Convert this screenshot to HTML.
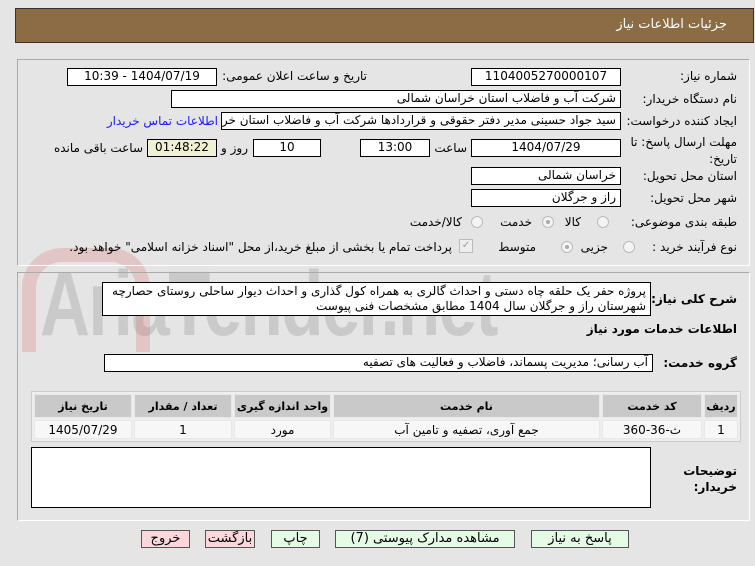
<!DOCTYPE html>
<html><head><meta charset="utf-8"><style>
body{margin:0;width:755px;height:566px;background:#e5e5e5;font-family:Tahoma,"DejaVu Sans","Liberation Sans",sans-serif;font-size:12px;color:#000;position:relative;overflow:hidden}
.a{position:absolute}
.f{position:absolute;background:#fff;border:1px solid #000;box-sizing:border-box;direction:rtl;padding:0 4px;line-height:15px;white-space:nowrap;overflow:hidden}
.c{text-align:center}
.l{position:absolute;direction:rtl;white-space:nowrap}
.r{right:18px}
.rad{position:absolute;width:12px;height:12px;border-radius:50%;border:1px solid #bbb;background:#f4f4f4;box-sizing:border-box}
.rad.on::after{content:"";position:absolute;left:3px;top:3px;width:4px;height:4px;border-radius:50%;background:#aaa}
.btn{position:absolute;top:530px;height:18px;border:1px solid #555;box-sizing:border-box;text-align:center;line-height:16px;font-size:13px}
td{border:1px solid #e8e8e8;text-align:center;padding:0;white-space:nowrap}
.b{font-weight:bold;font-size:12px}
</style></head><body>
<div class="a" style="left:15px;top:8px;width:739px;height:35px;background:#8b6c44;border:1px solid #333;box-sizing:border-box"></div>
<div class="l" style="right:28px;top:17px;color:#fff;font-size:13px">جزئیات اطلاعات نیاز</div>

<div class="a" style="left:40px;top:258px;font-size:92px;font-weight:bold;color:rgba(150,150,150,0.33);font-family:'Liberation Sans',sans-serif;letter-spacing:-2px;line-height:92px;transform:scaleX(0.75);transform-origin:left">AriaTender.net</div>
<div class="a" style="left:22px;top:248px;width:100px;height:90px;border:14px solid rgba(220,120,120,0.28);border-bottom:none;border-radius:40px 40px 0 0"></div>

<div class="a" style="left:17px;top:59px;width:733px;height:207px;border:1px solid #aaa;border-right-color:#fff;border-bottom-color:#fff;box-sizing:border-box"></div>
<div class="a" style="left:17px;top:272px;width:733px;height:249px;border:1px solid #aaa;border-right-color:#fff;border-bottom-color:#fff;box-sizing:border-box"></div>

<div class="l r" style="top:69px">شماره نیاز:</div>
<div class="f c" style="left:471px;top:68px;width:150px;height:18px">1104005270000107</div>
<div class="l" style="right:388px;top:69px">تاریخ و ساعت اعلان عمومی:</div>
<div class="f c" style="left:67px;top:68px;width:150px;height:18px">1404/07/19 - 10:39</div>

<div class="l r" style="top:92px">نام دستگاه خریدار:</div>
<div class="f" style="left:171px;top:90px;width:450px;height:18px">شرکت آب و فاضلاب استان خراسان شمالی</div>

<div class="l r" style="top:114px">ایجاد کننده درخواست:</div>
<div class="f" style="left:221px;top:112px;width:400px;height:18px">سید جواد حسینی مدیر دفتر حقوقی و قراردادها  شرکت آب و فاضلاب استان خراسان شمالی</div>
<div class="l" style="right:537px;top:114px;color:#1a1aff">اطلاعات تماس خریدار</div>

<div class="l r" style="top:134px;line-height:17px;text-align:right">مهلت ارسال پاسخ: تا<br>تاریخ:</div>
<div class="f c" style="left:471px;top:139px;width:150px;height:18px">1404/07/29</div>
<div class="l" style="right:288px;top:141px">ساعت</div>
<div class="f c" style="left:360px;top:139px;width:70px;height:18px">13:00</div>
<div class="f c" style="left:253px;top:139px;width:68px;height:18px">10</div>
<div class="l" style="right:507px;top:141px">روز و</div>
<div class="f c" style="left:147px;top:139px;width:70px;height:18px;background:#f0f0d2">01:48:22</div>
<div class="l" style="right:612px;top:141px">ساعت باقی مانده</div>

<div class="l r" style="top:169px">استان محل تحویل:</div>
<div class="f" style="left:471px;top:167px;width:150px;height:18px">خراسان شمالی</div>
<div class="l r" style="top:191px">شهر محل تحویل:</div>
<div class="f" style="left:471px;top:189px;width:150px;height:18px">راز و جرگلان</div>

<div class="l r" style="top:215px">طبقه بندی موضوعی:</div>
<div class="rad" style="left:597px;top:216px"></div><div class="l" style="right:174px;top:215px">کالا</div>
<div class="rad on" style="left:542px;top:216px"></div><div class="l" style="right:223px;top:215px">خدمت</div>
<div class="rad" style="left:471px;top:216px"></div><div class="l" style="right:293px;top:215px">کالا/خدمت</div>

<div class="l r" style="top:240px">نوع فرآیند خرید :</div>
<div class="rad" style="left:623px;top:241px"></div><div class="l" style="right:147px;top:240px">جزیی</div>
<div class="rad on" style="left:561px;top:241px"></div><div class="l" style="right:219px;top:240px">متوسط</div>
<div class="a" style="left:459px;top:239px;width:12px;height:12px;border:1px solid #bbb;background:#eee;font-size:10px;line-height:11px;color:#999;text-align:center">✓</div>
<div class="l" style="right:303px;top:240px">پرداخت تمام یا بخشی از مبلغ خرید،از محل "اسناد خزانه اسلامی" خواهد بود.</div>

<div class="l r b" style="top:292px">شرح کلی نیاز:</div>
<div class="f" style="left:102px;top:282px;width:549px;height:34px;white-space:normal;line-height:15px;padding-top:1px">پروژه حفر یک حلقه چاه دستی و احداث گالری به همراه کول گذاری و احداث دیوار ساحلی روستای حصارچه شهرستان راز و جرگلان سال 1404 مطابق مشخصات فنی پیوست</div>
<div class="l r b" style="top:322px">اطلاعات خدمات مورد نیاز</div>
<div class="l r b" style="top:356px">گروه خدمت:</div>
<div class="f" style="left:104px;top:354px;width:549px;height:18px">آب رسانی؛ مدیریت پسماند، فاضلاب و فعالیت های تصفیه</div>

<table class="a" style="left:31px;top:391px;width:710px;height:49px;border-collapse:separate;border-spacing:2px;border:1px solid #ccc;direction:rtl;background:#eee;table-layout:fixed">
<tr style="background:#c9c9c9;font-weight:bold;height:24px;font-size:11px"><td style="width:32px">ردیف</td><td style="width:98px">کد خدمت</td><td>نام خدمت</td><td style="width:95px">واحد اندازه گیری</td><td style="width:96px">تعداد / مقدار</td><td style="width:96px">تاریخ نیاز</td></tr>
<tr style="background:#f7f7f7;height:19px"><td>1</td><td>ث-36-360</td><td>جمع آوری، تصفیه و تامین آب</td><td>مورد</td><td>1</td><td>1405/07/29</td></tr>
</table>

<div class="f" style="left:31px;top:447px;width:620px;height:61px"></div>
<div class="l r b" style="top:463px;line-height:16px;text-align:right">توضیحات<br>خریدار:</div>

<div class="btn" style="left:141px;width:49px;background:#fbd7dc">خروج</div>
<div class="btn" style="left:205px;width:50px;background:#fbd7dc">بازگشت</div>
<div class="btn" style="left:271px;width:49px;background:#e6fbe6">چاپ</div>
<div class="btn" style="left:335px;width:180px;background:#e6fbe6">مشاهده مدارک پیوستی (7)</div>
<div class="btn" style="left:531px;width:98px;background:#e6fbe6">پاسخ به نیاز</div>
</body></html>
